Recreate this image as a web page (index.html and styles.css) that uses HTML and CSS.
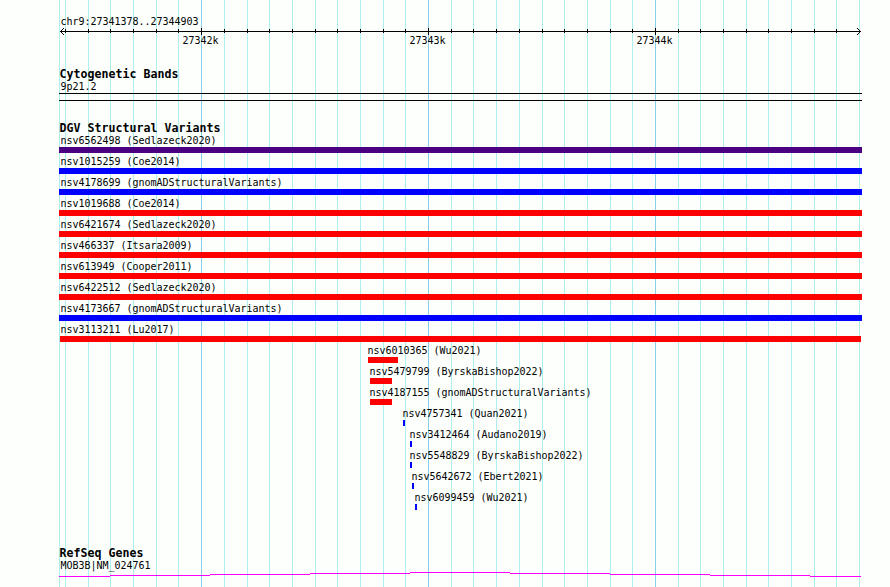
FILE: index.html
```
<!DOCTYPE html>
<html>
<head>
    <meta charset="utf-8">
    <title>chr9:27341378..27344903</title>
    <link rel="stylesheet" href="styles.css">
</head>
<body>
    <svg class="grid" width="890" height="587">
        <path class="minor" d="M59.5 0v587M65.5 0v587M88.5 0v587M110.5 0v587M133.5 0v587M156.5 0v587M178.5 0v587M224.5 0v587M247.5 0v587M269.5 0v587M292.5 0v587M315.5 0v587M337.5 0v587M360.5 0v587M383.5 0v587M405.5 0v587M451.5 0v587M473.5 0v587M496.5 0v587M519.5 0v587M542.5 0v587M564.5 0v587M587.5 0v587M610.5 0v587M632.5 0v587M678.5 0v587M700.5 0v587M723.5 0v587M746.5 0v587M768.5 0v587M791.5 0v587M814.5 0v587M836.5 0v587M859.5 0v587"/>
        <path class="major" d="M201.5 0v587M428.5 0v587M655.5 0v587"/>
    </svg>

    <div class="panel">
        <div class="ruler">
            <div class="label">chr9:27341378..27344903</div>
            <svg class="scale" width="803" height="7">
                <path d="M1 3.5H802"/>
                <path d="M1.5 3v1M2.5 2v1M2.5 4v1M3.5 1v1M3.5 5v1M4.5 0v1M4.5 6v1M801.5 3v1M800.5 2v3M799.5 1v1M799.5 5v1M798.5 0v1M798.5 6v1"/>
                <path d="M6.5 1v4M29.5 1v4M51.5 1v4M74.5 1v4M97.5 1v4M119.5 1v4M165.5 1v4M188.5 1v4M210.5 1v4M233.5 1v4M256.5 1v4M278.5 1v4M301.5 1v4M324.5 1v4M346.5 1v4M392.5 1v4M414.5 1v4M437.5 1v4M460.5 1v4M483.5 1v4M505.5 1v4M528.5 1v4M551.5 1v4M573.5 1v4M619.5 1v4M641.5 1v4M664.5 1v4M687.5 1v4M709.5 1v4M732.5 1v4M755.5 1v4M777.5 1v4"/>
                <path d="M142.5 0v7M369.5 0v7M596.5 0v7"/>
            </svg>
            <div class="ticks">
                <span>27342k</span>
                <span>27343k</span>
                <span>27344k</span>
            </div>
        </div>

        <div class="track cyto">
            <h2>Cytogenetic Bands</h2>
            <div class="label">9p21.2</div>
            <div class="band"></div>
        </div>

        <div class="track variants">
            <h2>DGV Structural Variants</h2>
            <div class="variant"><div class="label">nsv6562498 (Sedlazeck2020)</div><div class="bar complex"></div></div>
            <div class="variant"><div class="label">nsv1015259 (Coe2014)</div><div class="bar gain"></div></div>
            <div class="variant"><div class="label">nsv4178699 (gnomADStructuralVariants)</div><div class="bar gain"></div></div>
            <div class="variant"><div class="label">nsv1019688 (Coe2014)</div><div class="bar loss"></div></div>
            <div class="variant"><div class="label">nsv6421674 (Sedlazeck2020)</div><div class="bar loss"></div></div>
            <div class="variant"><div class="label">nsv466337 (Itsara2009)</div><div class="bar loss"></div></div>
            <div class="variant"><div class="label">nsv613949 (Cooper2011)</div><div class="bar loss"></div></div>
            <div class="variant"><div class="label">nsv6422512 (Sedlazeck2020)</div><div class="bar loss"></div></div>
            <div class="variant"><div class="label">nsv4173667 (gnomADStructuralVariants)</div><div class="bar gain"></div></div>
            <div class="variant inside"><div class="label">nsv3113211 (Lu2017)</div><div class="bar loss"></div></div>
            <div class="variant short" style="margin-left: 308px"><div class="label">nsv6010365 (Wu2021)</div><div class="bar loss" style="width: 30px"></div></div>
            <div class="variant short" style="margin-left: 310px"><div class="label">nsv5479799 (ByrskaBishop2022)</div><div class="bar loss" style="width: 22px"></div></div>
            <div class="variant short" style="margin-left: 310px"><div class="label">nsv4187155 (gnomADStructuralVariants)</div><div class="bar loss" style="width: 22px"></div></div>
            <div class="variant short" style="margin-left: 343px"><div class="label">nsv4757341 (Quan2021)</div><div class="bar gain" style="width: 2px"></div></div>
            <div class="variant short" style="margin-left: 350px"><div class="label">nsv3412464 (Audano2019)</div><div class="bar gain" style="width: 2px"></div></div>
            <div class="variant short" style="margin-left: 350px"><div class="label">nsv5548829 (ByrskaBishop2022)</div><div class="bar gain" style="width: 2px"></div></div>
            <div class="variant short" style="margin-left: 352px"><div class="label">nsv5642672 (Ebert2021)</div><div class="bar gain" style="width: 2px"></div></div>
            <div class="variant short" style="margin-left: 355px"><div class="label">nsv6099459 (Wu2021)</div><div class="bar gain" style="width: 2px"></div></div>
        </div>

        <div class="track genes">
            <h2>RefSeq Genes</h2>
            <div class="label">MOB3B|NM_024761</div>
            <svg class="intron" width="803" height="5">
                <path d="M0 4.5H51M51 3.5H151M151 2.5H251M251 1.5H351M351 .5H451M451 1.5H551M551 2.5H651M651 3.5H751M751 4.5H802"/>
            </svg>
        </div>
    </div>
</body>
</html>
```
FILE: styles.css
```
body {
    margin: 0;
    height: 587px;
    overflow: hidden;
    position: relative;
    background-color: #fdfffc;
    color: #000;
    font-family: "DejaVu Sans Mono", monospace;
    font-size: 10px;
}
svg {
    display: block;
    fill: none;
    shape-rendering: crispEdges;
}
.grid {
    position: absolute;
    top: 0;
    left: 0;
}
.minor {
    stroke: #afeeee;
}
.major {
    stroke: #87ceeb;
}
.panel {
    position: relative;
    width: 803px;
    margin-left: 59px;
    padding-top: 15px;
}
.label {
    height: 13px;
    line-height: 13px;
    padding-left: 1.5px;
    letter-spacing: -0.02px;
    white-space: pre;
}
.ruler {
    height: 52px;
}
.scale {
    stroke: #000;
}
.ticks {
    display: flex;
    gap: 191px;
    padding-left: 123.5px;
    margin-top: -1px;
    line-height: 13px;
    letter-spacing: -0.02px;
}
.ticks span {
    width: 36px;
}
h2 {
    margin: 0;
    height: 13px;
    line-height: 15px;
    padding-left: 0.5px;
    font-size: 11.6px;
    letter-spacing: 0.02px;
    font-weight: bold;
    white-space: pre;
}
.cyto {
    height: 54px;
}
.band {
    height: 6px;
    border-top: 1px solid #000;
    border-bottom: 1px solid #000;
}
.variants {
    height: 425px;
}
.variant {
    height: 21px;
}
.bar {
    height: 6px;
}
.gain {
    background-color: #0000ff;
}
.loss {
    background-color: #ff0000;
}
.complex {
    background-color: #4b0082;
}
.inside .bar {
    margin: 0 1px;
}
.short .label {
    padding-left: 0.5px;
}
.short .bar {
    margin-left: 1px;
}
.intron {
    stroke: #ff00ff;
}
```
